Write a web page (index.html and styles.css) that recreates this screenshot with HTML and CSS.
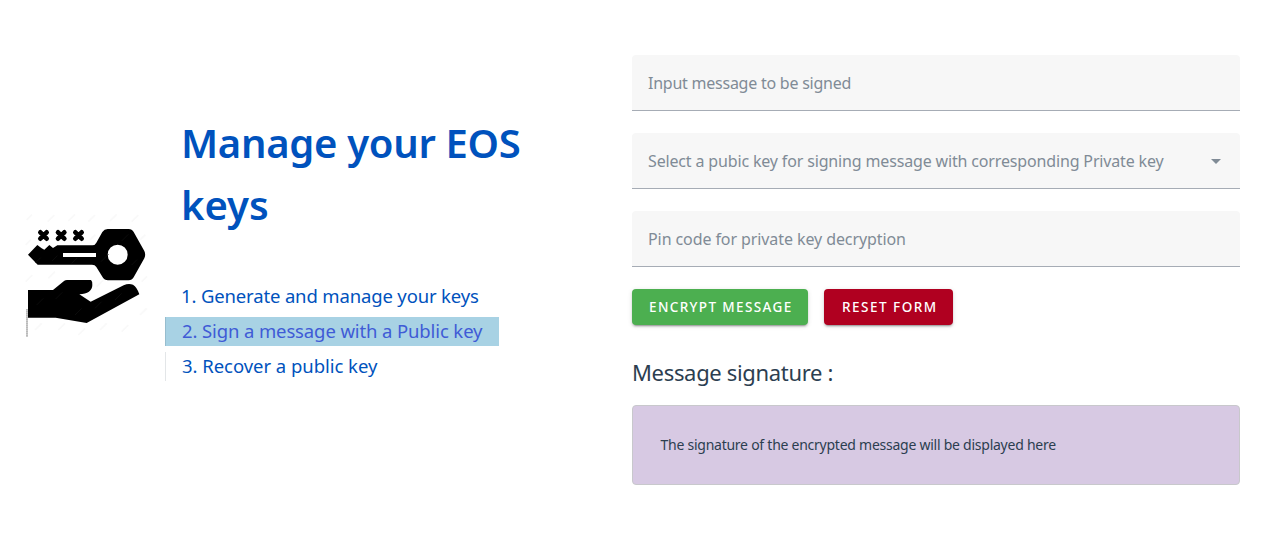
FILE: index.html
```html
<!DOCTYPE html>
<html lang="en">
<head>
<meta charset="utf-8">
<title>Manage your EOS keys</title>
<link rel="stylesheet" href="styles.css">
</head>
<body>
<main class="page">
  <section class="intro">
    <svg class="logo" viewBox="27 24 375 378" aria-hidden="true">
      <g class="grain">
        <path d="M35 45l16-16M98 50l20-20M160 48l20-20M220 50l20-20M285 48l20-20M350 50l20-20M32 120l16-16M225 105l16-16M375 105l16-16M32 230l20-20M100 220l20-20M245 245l20-20M380 230l16-16M60 375l20-20M130 375l20-20M190 390l20-20M255 375l20-20M320 380l20-20M375 330l20-20"/>
      </g>
      <path d="M39 149L67 120L80 130L88 134L103 120L114 129L127 121H232Q240 121 244 113L262 81Q268 72 278 72H341Q351 72 356 81L388 138Q393 149 388 160L356 217Q351 226 341 226H279Q268 226 263 217L244 186Q240 179 231 179H68ZM144 144V156H243V144ZM308 119A30 30 0 1 0 308 179A30 30 0 1 0 308 119Z" fill-rule="evenodd"/>
      <path d="M39 255H114L148 227Q151 225 156 225H228Q233 229 232 240C232 257 218 267 193 268L227 290L326 241Q340 234 354 239Q366 246 373 268L215 354L122 338H39Z"/>
      <path class="mark" d="M76 82L95 101M95 82L76 101M129 82L148 101M148 82L129 101M181 82L200 101M200 82L181 101"/>
      <path class="edge" d="M36 312V395"/>
      <path class="sheen" d="M62 173l15-15M111 168l16-16M170 175l16-16M258 170l22-22M320 108l20-20M350 180l16-16M65 300l20-20M122 282l20-20M180 330l20-20M240 310l20-20M300 285l20-20"/>
    </svg>
    <div class="summary">
      <h1 class="title"><span class="line-one">Manage your EOS</span><br><span class="line-two">keys</span></h1>
      <nav class="steps">
        <a class="step step-first"><span class="t1">1. Generate and manage your keys</span></a>
        <a class="step step-active"><span class="t2">2. Sign a message with a Public key</span></a>
        <a class="step"><span class="t3">3. Recover a public key</span></a>
      </nav>
    </div>
  </section>
  <section class="form">
    <div class="field"><span class="f1">Input message to be signed</span></div>
    <div class="field"><span class="f2">Select a pubic key for signing message with corresponding Private key</span>
      <svg class="caret" viewBox="0 0 10 5" aria-hidden="true"><path d="M0 0H10L5 5Z"/></svg></div>
    <div class="field"><span class="f3">Pin code for private key decryption</span></div>
    <div class="actions">
      <button class="btn btn-go"><span class="b1">ENCRYPT MESSAGE</span></button>
      <button class="btn btn-reset"><span class="b2">RESET FORM</span></button>
    </div>
    <h2 class="result-title"><span class="r1">Message signature :</span></h2>
    <div class="result"><span class="r2">The signature of the encrypted message will be displayed here</span></div>
  </section>
</main>
</body>
</html>
```
FILE: styles.css
```css
* { box-sizing: border-box; }
body {
  margin: 0;
  background: #fff;
  color: #2c3e50;
  font-family: "Noto Sans", sans-serif;
}
.page {
  display: grid;
  grid-template-columns: 608px 608px;
  padding: 55px 0 0 24px;
  height: 544px;
}
.intro { display: flex; align-items: flex-start; }
.logo { width: 125px; height: 126px; margin-top: 158px; flex: none; }
.grain path { fill: none; stroke: #f9f9f9; stroke-width: 5; }
.mark { fill: none; stroke: #000; stroke-width: 14; stroke-linecap: round; }
.edge { fill: none; stroke: #999; stroke-width: 4; stroke-dasharray: 5 1; }
.sheen { fill: none; stroke: #0c0c0c; stroke-width: 3; }
.summary { padding: 57px 0 0 16px; }
.title {
  margin: 0 0 46px 16px;
  font-size: 40px;
  line-height: 62px;
  font-weight: 560;
  color: #0052bd;
  white-space: nowrap;
}
.line-one { letter-spacing: -0.3px; }
.steps { display: flex; flex-direction: column; align-items: flex-start; gap: 6px; }
.step {
  height: 29px;
  padding: 0 16px;
  border-left: 1px solid #e3e6e8;
  font-size: 18.5px;
  line-height: 27px;
  color: #0052bd;
  white-space: nowrap;
}
.step-first { border-left: 0; }
.step-active { width: 334px; background: #a8d2e4; border-color: #97bdce; color: #3f5bd6; }
.t1 { letter-spacing: -0.15px; }
.t2 { letter-spacing: -0.12px; }
.t3 { letter-spacing: -0.04px; }
.form { display: flex; flex-direction: column; }
.field {
  display: flex;
  align-items: center;
  justify-content: space-between;
  height: 56px;
  margin-bottom: 22px;
  padding: 0 19px 0 16px;
  border-bottom: 1px solid #a6acb5;
  border-radius: 4px 4px 0 0;
  background: #f7f7f7;
  color: #808b96;
  font-size: 16px;
  white-space: nowrap;
}
.f1 { letter-spacing: -0.24px; }
.f2 { letter-spacing: -0.155px; }
.f3 { letter-spacing: -0.09px; }
.caret { width: 10px; height: 5px; margin-top: 1px; fill: #808b96; }
.actions { display: flex; gap: 16px; }
.btn {
  height: 36px;
  padding: 0 0 0 17px;
  border: 0;
  border-radius: 4px;
  color: #fff;
  font: 500 13.5px/36px "Noto Sans", sans-serif;
  text-align: left;
  white-space: nowrap;
  box-shadow: 0 3px 1px -2px rgba(0,0,0,.2), 0 2px 2px rgba(0,0,0,.14), 0 1px 5px rgba(0,0,0,.12);
}
.btn-go { width: 176px; background: #4caf50; }
.btn-reset { width: 129px; padding-left: 18px; background: #b00020; }
.b1 { letter-spacing: 1.37px; }
.b2 { letter-spacing: 1.5px; }
.result-title { margin: 31px 0 17px; font-size: 22px; line-height: 32px; font-weight: 400; }
.r1 { letter-spacing: -0.33px; }
.result {
  height: 80px;
  padding: 0 27.5px;
  border: 1px solid #c8c8cc;
  border-radius: 4px;
  background: #d7c9e3;
  font-size: 14px;
  line-height: 78px;
  white-space: nowrap;
}
.r2 { letter-spacing: -0.25px; }
```
